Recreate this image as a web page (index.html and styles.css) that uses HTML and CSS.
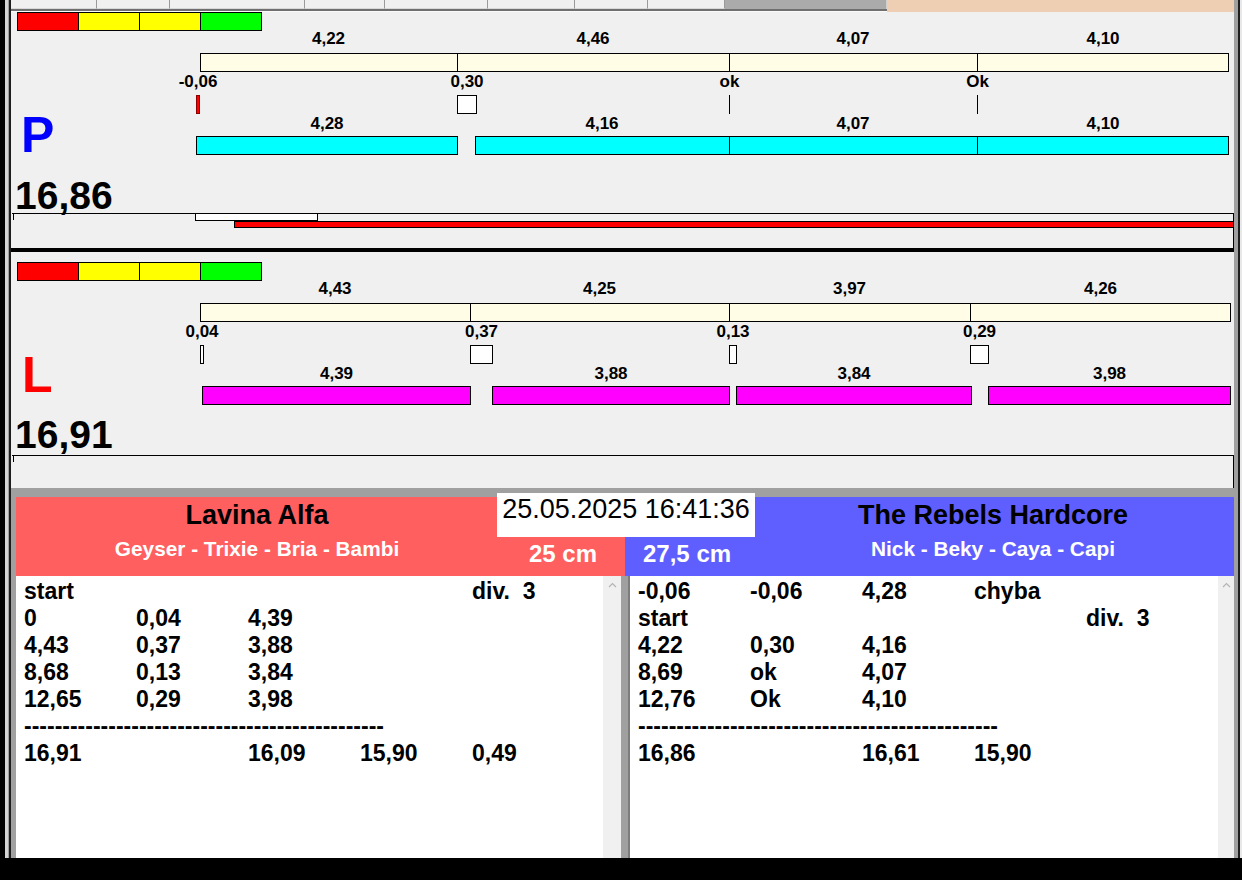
FILE: index.html
```html
<!DOCTYPE html>
<html lang="sk">
<head>
<meta charset="utf-8">
<title>Lavina Alfa vs The Rebels Hardcore</title>
<link rel="stylesheet" href="styles.css">
</head>
<body>
<div class="app">
  <div class="window">
    <div class="frame-l"></div>
    <div class="main">
      <div class="tabs">
        <div class="tab-group">
          <div class="tab" style="width:86px"></div>
          <div class="tab" style="width:73px"></div>
          <div class="tab" style="width:135px"></div>
          <div class="tab" style="width:80px"></div>
          <div class="tab" style="width:103px"></div>
          <div class="tab" style="width:87px"></div>
          <div class="tab" style="width:73px"></div>
          <div class="tab" style="width:77px"></div>
          <div class="tab-fill"></div>
        </div>
        <div class="tabs-peach"></div>
      </div>

      <section class="lane lane-p">
        <div class="lane-letter letter-p">P</div>
        <div class="meter"><i class="m-red"></i><i class="m-yel"></i><i class="m-yel"></i><i class="m-grn"></i></div>
        <div class="seg-labels top" style="margin-left:189px">
          <span style="width:257px">4,22</span><span style="width:272px">4,46</span><span style="width:248px">4,07</span><span style="width:252px">4,10</span>
        </div>
        <div class="bar" style="margin-left:189px">
          <span class="seg cream" style="width:257px"></span><span class="seg cream" style="width:272px"></span><span class="seg cream" style="width:248px"></span><span class="seg cream end" style="width:252px"></span>
        </div>
        <div class="gaps">
          <div class="gap" style="margin-left:185px;width:4px"><b>-0,06</b><i class="mk-neg"></i></div>
          <div class="gap" style="margin-left:257px;width:20px"><b>0,30</b><i class="mk-box"></i></div>
          <div class="gap" style="margin-left:252px;width:1px"><b>ok</b><i class="mk-tick"></i></div>
          <div class="gap" style="margin-left:247px;width:1px"><b>Ok</b><i class="mk-tick"></i></div>
        </div>
        <div class="seg-labels low">
          <span style="margin-left:185px;width:262px">4,28</span><span style="margin-left:17px;width:254px">4,16</span><span style="width:248px">4,07</span><span style="width:252px">4,10</span>
        </div>
        <div class="bar low">
          <span class="seg cyan end" style="margin-left:185px;width:262px"></span><span class="seg cyan" style="margin-left:17px;width:254px"></span><span class="seg cyan" style="width:248px"></span><span class="seg cyan end" style="width:252px"></span>
        </div>
        <div class="lane-foot">
          <div class="total">16,86</div>
          <div class="track track-p">
            <div class="track-top"><span class="tick"></span><span class="run-box" style="margin-left:181px;width:123px"></span></div>
            <div class="run-bar" style="margin-left:222px"></div>
          </div>
        </div>
      </section>

      <div class="lane-sep"></div>

      <section class="lane lane-l">
        <div class="lane-letter letter-l">L</div>
        <div class="meter"><i class="m-red"></i><i class="m-yel"></i><i class="m-yel"></i><i class="m-grn"></i></div>
        <div class="seg-labels top" style="margin-left:189px">
          <span style="width:270px">4,43</span><span style="width:259px">4,25</span><span style="width:241px">3,97</span><span style="width:261px">4,26</span>
        </div>
        <div class="bar" style="margin-left:189px">
          <span class="seg cream" style="width:270px"></span><span class="seg cream" style="width:259px"></span><span class="seg cream" style="width:241px"></span><span class="seg cream end" style="width:261px"></span>
        </div>
        <div class="gaps">
          <div class="gap" style="margin-left:189px;width:4px"><b>0,04</b><i class="mk-box"></i></div>
          <div class="gap" style="margin-left:266px;width:23px"><b>0,37</b><i class="mk-box"></i></div>
          <div class="gap" style="margin-left:236px;width:8px"><b>0,13</b><i class="mk-box"></i></div>
          <div class="gap" style="margin-left:233px;width:19px"><b>0,29</b><i class="mk-box"></i></div>
        </div>
        <div class="seg-labels low">
          <span style="margin-left:191px;width:269px">4,39</span><span style="margin-left:21px;width:238px">3,88</span><span style="margin-left:6px;width:236px">3,84</span><span style="margin-left:16px;width:243px">3,98</span>
        </div>
        <div class="bar low">
          <span class="seg magenta end" style="margin-left:191px;width:269px"></span><span class="seg magenta end" style="margin-left:21px;width:238px"></span><span class="seg magenta end" style="margin-left:6px;width:236px"></span><span class="seg magenta end" style="margin-left:16px;width:243px"></span>
        </div>
        <div class="lane-foot">
          <div class="total">16,91</div>
          <div class="track track-l">
            <div class="track-top"><span class="tick"></span></div>
          </div>
        </div>
      </section>

      <div class="teams">
        <div class="datetime">25.05.2025 16:41:36</div>
        <div class="team-head">
          <div class="head head-red">
            <div class="team-name">Lavina Alfa</div>
            <div class="head-row">
              <div class="members">Geyser - Trixie - Bria - Bambi</div>
              <div class="height">25 cm</div>
            </div>
          </div>
          <div class="head head-blue">
            <div class="team-name">The Rebels Hardcore</div>
            <div class="head-row">
              <div class="height">27,5 cm</div>
              <div class="members">Nick - Beky - Caya - Capi</div>
            </div>
          </div>
        </div>
        <div class="lists">
          <div class="list list-l">
            <div class="row"><span>start</span><span></span><span></span><span></span><span class="pre">div.  3</span></div>
            <div class="row"><span>0</span><span>0,04</span><span>4,39</span></div>
            <div class="row"><span>4,43</span><span>0,37</span><span>3,88</span></div>
            <div class="row"><span>8,68</span><span>0,13</span><span>3,84</span></div>
            <div class="row"><span>12,65</span><span>0,29</span><span>3,98</span></div>
            <div class="row dashes">-----------------------------------------------</div>
            <div class="row"><span>16,91</span><span></span><span>16,09</span><span>15,90</span><span>0,49</span></div>
          </div>
          <div class="scroll scroll-l"><svg width="9" height="6" viewBox="0 0 9 6"><path d="M1 5 L4.5 1.5 L8 5" fill="none" stroke="#b4b4b4" stroke-width="1.2"/></svg></div>
          <div class="list list-r">
            <div class="row"><span>-0,06</span><span>-0,06</span><span>4,28</span><span>chyba</span></div>
            <div class="row"><span>start</span><span></span><span></span><span></span><span class="pre">div.  3</span></div>
            <div class="row"><span>4,22</span><span>0,30</span><span>4,16</span></div>
            <div class="row"><span>8,69</span><span>ok</span><span>4,07</span></div>
            <div class="row"><span>12,76</span><span>Ok</span><span>4,10</span></div>
            <div class="row dashes">-----------------------------------------------</div>
            <div class="row"><span>16,86</span><span></span><span>16,61</span><span>15,90</span></div>
          </div>
          <div class="scroll scroll-r"><svg width="9" height="6" viewBox="0 0 9 6"><path d="M1 5 L4.5 1.5 L8 5" fill="none" stroke="#b4b4b4" stroke-width="1.2"/></svg></div>
        </div>
      </div>
    </div>
    <div class="frame-r"></div>
  </div>
  <div class="taskbar"></div>
</div>
</body>
</html>
```

FILE: styles.css
```css
* { box-sizing: border-box; }
html, body { margin: 0; padding: 0; }
body { background: #000; font-family: "Liberation Sans", Arial, sans-serif; color: #000; }

.app { width: 1242px; height: 880px; display: flex; flex-direction: column; background: #000; overflow: hidden; }
.window { display: flex; height: 858px; }
.frame-l { width: 11px; flex: 0 0 11px; background: linear-gradient(to right, #000 0 5px, #d4d4d4 5px 8px, #a0a0a0 8px 9px, #1e1e1e 9px 11px); }
.frame-r { flex: 1; background: linear-gradient(to right, #a0a0a0 0 4px, #1e1e1e 4px 6px, #e8e8e8 6px 8px); }
.main { width: 1223px; flex: 0 0 1223px; display: flex; flex-direction: column; }
.taskbar { height: 22px; background: #000; }

/* tabs strip */
.tabs { height: 12px; display: flex; background: #f0f0f0; }
.tab-group { width: 876px; display: flex; border-bottom: 2px solid #6f6f6f; height: 11px; box-shadow: 0 1px 0 #fafafa; }
.tab { height: 9px; border-right: 1px solid #9a9a9a; border-bottom: 1px solid #d8d8d8; background: #f0f0f0; }
.tab-fill { flex: 1; height: 9px; background: #ababab; border-right: 1px solid #d0d0d0; }
.tabs-peach { flex: 1; background: #efcfb3; }

/* lanes */
.lane { position: relative; height: 236px; display: flex; flex-direction: column; background: #f0f0f0; }
.lane-l { padding-top: 10px; }
.lane-sep { height: 4px; background: #000; }

.lane-letter { position: absolute; bottom: 88px; font: bold 50px/50px "Liberation Sans", Arial, sans-serif; }
.letter-p { color: #0000ff; left: 10px; }
.letter-l { color: #ff0000; left: 11px; }

.meter { display: flex; margin-left: 6px; width: 245px; height: 19px; border: 1px solid #000; flex: 0 0 auto; }
.meter i { width: 60px; }
.meter i + i { width: 61px; border-left: 1px solid #000; }
.m-red { background: #ff0000; }
.m-yel { background: #ffff00; }
.m-grn { background: #00ff00; }

.seg-labels { display: flex; height: 20px; font: bold 17px/20px "Liberation Sans", Arial, sans-serif; flex: 0 0 auto; }
.seg-labels span { text-align: center; white-space: nowrap; flex: 0 0 auto; }
.seg-labels.top { margin-top: -2px; }

.bar { display: flex; height: 19px; margin-top: 4px; flex: 0 0 auto; }
.bar.low { margin-top: 2px; }
.seg { height: 19px; border: 1px solid #000; border-right: 0; flex: 0 0 auto; }
.seg.end { border-right: 1px solid #000; }
.cream { background: #fffde6; }
.cyan { background: #00ffff; }
.magenta { background: #ff00ff; }

.gaps { display: flex; align-items: flex-start; height: 42px; flex: 0 0 auto; }
.gap { display: flex; flex-direction: column; align-items: center; flex: 0 0 auto; }
.gap b { font: bold 17px/20px "Liberation Sans", Arial, sans-serif; white-space: nowrap; }
.gap i { display: block; margin-top: 3px; height: 19px; width: 100%; }
.mk-neg { background: #ff0000; border: 1px solid #8a0000; }
.mk-box { background: #fff; border: 1px solid #000; }
.mk-tick { background: #000; }

.lane-foot { margin-top: auto; }
.total { font: bold 39px/34px "Liberation Sans", Arial, sans-serif; padding-left: 4px; }
.lane-l .total { margin-bottom: 3px; }
.track { margin-left: 1px; width: 1222px; border-top: 1px solid #000; border-right: 1px solid #000; }
.track-p { height: 35px; }
.track-l { height: 33px; }
.track-top { display: flex; height: 7px; }
.tick { width: 1px; height: 6px; margin-left: 1px; background: #000; }
.run-box { height: 8px; margin-top: -1px; background: #fff; border: 1px solid #000; }
.run-bar { height: 7px; background: #ff0000; border: 1px solid #000; border-right: 0; }

/* teams */
.teams { position: relative; flex: 1; background: #a0a0a0; padding: 9px 0 0 5px; display: flex; flex-direction: column; }
.datetime { position: absolute; left: 486px; top: 5px; width: 258px; height: 44px; background: #fff; font: 27px/32px "Liberation Sans", Arial, sans-serif; text-align: center; z-index: 2; }
.team-head { display: flex; height: 79px; flex: 0 0 auto; }
.head { display: flex; flex-direction: column; color: #fff; }
.head-red { width: 609px; background: #ff5f5f; }
.head-blue { flex: 1; background: #5f5fff; }
.team-name { color: #000; font: bold 27px/30px "Liberation Sans", Arial, sans-serif; text-align: center; padding-top: 3px; height: 33px; white-space: nowrap; }
.head-red .team-name { padding-right: 127px; }
.head-blue .team-name { padding-left: 130px; padding-right: 3px; }
.head-row { display: flex; align-items: flex-start; }
.members { font: bold 20.8px/24px "Liberation Sans", Arial, sans-serif; text-align: center; margin-top: 7px; white-space: nowrap; }
.height { font: bold 24px/28px "Liberation Sans", Arial, sans-serif; margin-top: 10px; white-space: nowrap; }
.head-red .members { width: 482px; }
.head-red .height { flex: 1; text-align: right; padding-right: 28px; }
.head-blue .height { width: 130px; padding-left: 18px; }
.head-blue .members { flex: 1; padding-right: 3px; }

.lists { flex: 1; display: flex; }
.list { background: #fff; padding-top: 2px; font: bold 23px/27px "Liberation Sans", Arial, sans-serif; }
.list-l { width: 587px; padding-left: 8px; }
.list-r { width: 590px; padding-left: 8px; margin-left: 7px; border-left: 2px solid #7c7c7c; }
.row { display: grid; grid-template-columns: repeat(5, 112px); height: 27px; white-space: nowrap; }
.row.dashes { display: block; }
.pre { white-space: pre; }
.scroll { background: #f0f0f0; display: flex; justify-content: center; padding-top: 6px; }
.scroll-l { width: 18px; }
.scroll-r { width: 16px; }
.scroll svg { display: block; }
```
